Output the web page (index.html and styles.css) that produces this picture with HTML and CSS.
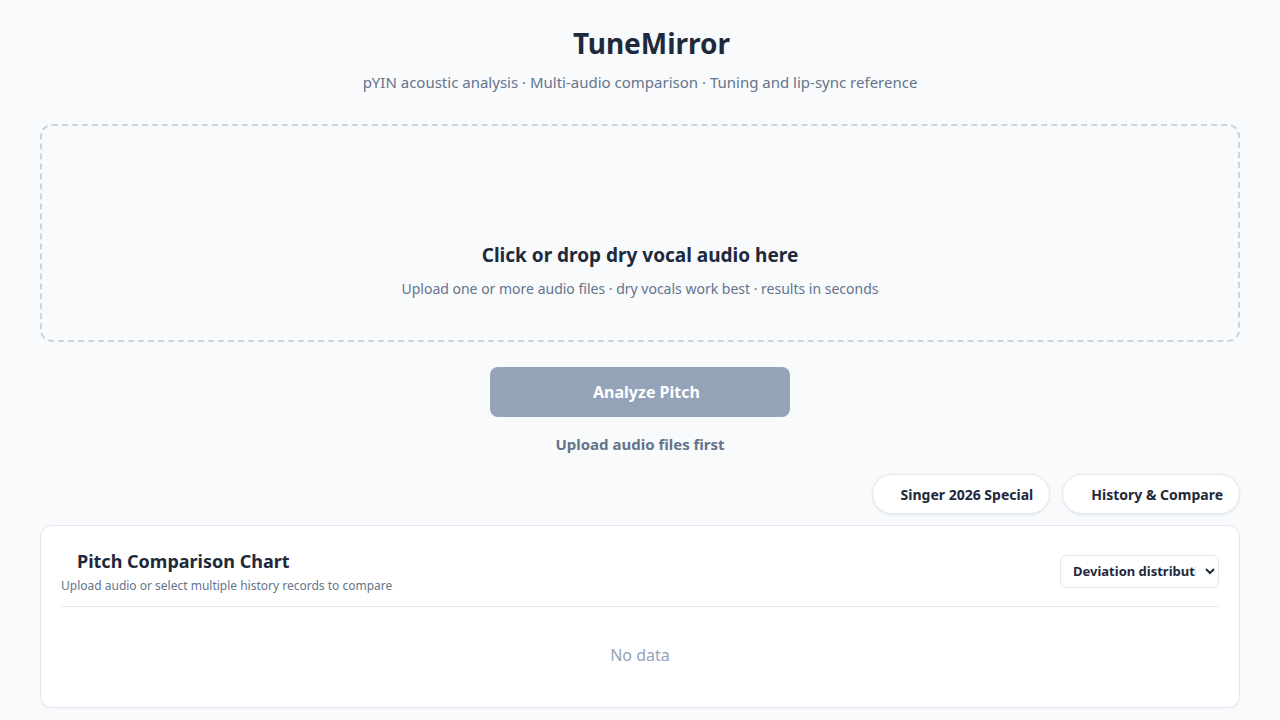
FILE: index.html
```html
<!DOCTYPE html>
<html lang="en">
<head>
    <meta charset="UTF-8">
    <title>TuneMirror</title>
    <link rel="stylesheet" href="styles.css">
</head>
<body>
    <div class="wrap">
        <header class="head">
            <h1><span class="logo-ico"></span>TuneMirror</h1>
            <p class="sub">pYIN acoustic analysis · Multi-audio comparison · Tuning and lip-sync reference</p>
        </header>

        <label class="drop">
            <span class="drop-title">Click or drop dry vocal audio here</span>
            <span class="drop-hint">Upload one or more audio files · dry vocals work best · results in seconds</span>
        </label>

        <div class="action">
            <button class="btn-analyze" disabled><span class="btn-ico"></span>Analyze Pitch</button>
            <p class="action-tip">Upload audio files first</p>
        </div>

        <div class="pills">
            <a class="pill" href="javascript:;"><span class="pill-ico"></span>Singer 2026 Special</a>
            <a class="pill" href="javascript:;"><span class="pill-ico"></span>History &amp; Compare</a>
        </div>

        <section class="card">
            <div class="card-head">
                <div>
                    <h2><span class="card-ico"></span>Pitch Comparison Chart</h2>
                    <p class="card-sub">Upload audio or select multiple history records to compare</p>
                </div>
                <select class="mode">
                    <option>Deviation distribution</option>
                    <option>Pitch curve</option>
                </select>
            </div>
            <div class="empty">No data</div>
        </section>
    </div>
</body>
</html>
```

FILE: styles.css
```css
*{
    margin: 0;
    padding: 0;
    box-sizing: border-box;
}
a{
    text-decoration: none;
    color: inherit;
}
body{
    background: #f8fafc;
    font-family: "Noto Sans", "Open Sans", sans-serif;
    color: #1e293b;
}
.wrap{
    padding: 24px 40px 12px;
    display: flex;
    flex-direction: column;
}
.head{
    text-align: center;
}
.head h1{
    font-size: 28px;
    line-height: 38px;
    font-weight: 700;
}
.logo-ico{
    display: inline-block;
    width: 23px;
}
.sub{
    margin-top: 9px;
    font-size: 15px;
    line-height: 22px;
    color: #64748b;
}
.drop{
    margin-top: 31px;
    height: 218px;
    border: 2px dashed #cbd5e1;
    border-radius: 12px;
    display: flex;
    flex-direction: column;
    align-items: center;
    justify-content: flex-end;
    padding-bottom: 41px;
    cursor: pointer;
}
.drop-title{
    font-size: 19px;
    line-height: 26px;
    font-weight: 700;
}
.drop-hint{
    margin-top: 11px;
    font-size: 14px;
    line-height: 20px;
    color: #64748b;
}
.action{
    margin-top: 25px;
    display: flex;
    flex-direction: column;
    align-items: center;
}
.btn-analyze{
    width: 300px;
    height: 50px;
    border: 0;
    border-radius: 8px;
    background: #94a3b8;
    color: #fff;
    font: 700 16px/50px "Noto Sans", "Open Sans", sans-serif;
}
.btn-ico{
    display: inline-block;
    width: 13px;
}
.action-tip{
    margin-top: 16px;
    font-size: 15px;
    line-height: 22px;
    font-weight: 700;
    color: #64748b;
}
.pills{
    margin-top: 19px;
    display: flex;
    justify-content: flex-end;
    gap: 12px;
}
.pill{
    height: 40px;
    padding: 0 16px 0 12px;
    display: flex;
    align-items: center;
    gap: 4px;
    background: #fff;
    border: 1px solid #e2e8f0;
    border-radius: 20px;
    box-shadow: 0 1px 3px rgba(15, 23, 42, .08);
    font-size: 14px;
    font-weight: 700;
    color: #1e293b;
}
.pill-ico{
    width: 12px;
}
.card{
    margin-top: 11px;
    background: #fff;
    border: 1px solid #e2e8f0;
    border-radius: 12px;
    box-shadow: 0 1px 2px rgba(15, 23, 42, .04);
    padding: 21px 20px 0;
}
.card-head{
    display: flex;
    justify-content: space-between;
    align-items: center;
    padding-bottom: 11px;
    border-bottom: 1px solid #e2e8f0;
}
.card-head h2{
    font-size: 18px;
    line-height: 28px;
    font-weight: 700;
    display: flex;
    align-items: center;
}
.card-ico{
    width: 16px;
}
.card-sub{
    margin-top: 2px;
    font-size: 12px;
    line-height: 18px;
    color: #64748b;
}
.mode{
    width: 159px;
    height: 33px;
    padding: 0 6px 0 8px;
    border: 1px solid #e2e8f0;
    border-radius: 6px;
    background: #fff;
    font: 700 13px "Noto Sans", "Open Sans", sans-serif;
    color: #1e293b;
}
.empty{
    height: 100px;
    padding-bottom: 4px;
    display: flex;
    align-items: center;
    justify-content: center;
    font-size: 16px;
    color: #94a3b8;
}
```
